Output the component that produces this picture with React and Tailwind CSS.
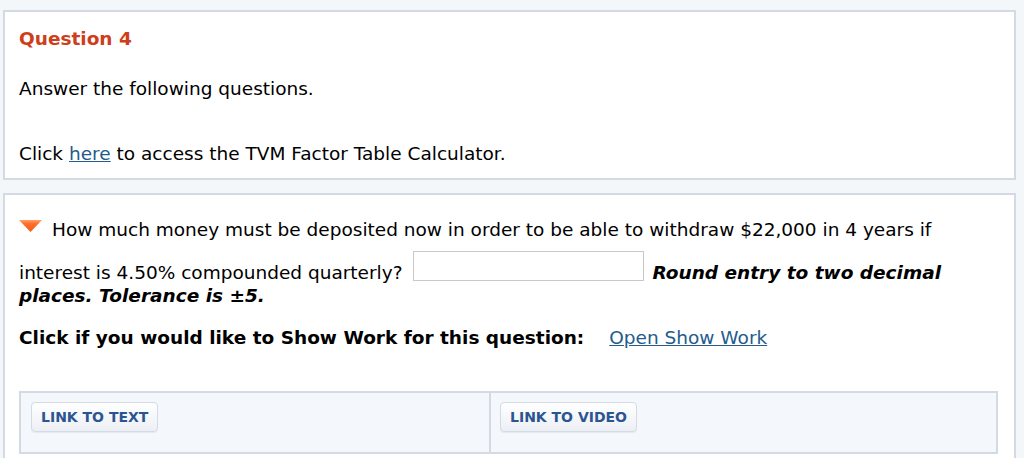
import React from 'react';

function Caret() {
  return (
    <svg width="23" height="12" viewBox="0 0 23 12" className="shrink-0 mt-[1px]">
      <defs>
        <linearGradient id="caret" x1="0" y1="0" x2="0" y2="1">
          <stop offset="0" stopColor="#ffa06a" />
          <stop offset="0.3" stopColor="#ff6f2c" />
          <stop offset="1" stopColor="#f25a17" />
        </linearGradient>
      </defs>
      <polygon points="0,0 23,0 11.5,12" fill="url(#caret)" />
    </svg>
  );
}

function LinkButton({ children }) {
  return (
    <button className="h-[30px] px-[9px] rounded-[4px] border border-[#d5dbe4] bg-gradient-to-b from-white to-[#eceff4] shadow-[0_1px_1px_rgba(0,0,0,0.06)] text-[14px] font-bold text-[#2b5591] leading-none">
      {children}
    </button>
  );
}

export default function App() {
  return (
    <div className="min-h-[458px] bg-[#f4f7fa] pt-[10px] pl-[3px] font-['DejaVu_Sans',Verdana,sans-serif] text-[18.5px] leading-[23px] text-black">
      <section className="w-[1013px] bg-white border-2 border-[#d3dae4] pt-[15px] pb-[13px] px-[14px]">
        <h2 className="font-bold text-[#cf3e1b]">Question 4</h2>
        <p className="mt-[27px]">Answer the following questions.</p>
        <p className="mt-[42px]">
          Click <a href="#" className="text-[#235b8e] underline">here</a> to access the TVM Factor Table Calculator.
        </p>
      </section>

      <section className="w-[1013px] mt-[13px] bg-white border-2 border-[#d3dae4] pt-[24px] pb-[20px] px-[14px]">
        <div className="flex items-start">
          <Caret />
          <span className="ml-[10px] -mt-[1px]">
            How much money must be deposited now in order to be able to withdraw $22,000 in 4 years if
          </span>
        </div>
        <div className="mt-[10px] flex items-end">
          <span className="mb-[-1px]">interest is 4.50% compounded quarterly?</span>
          <input type="text" className="ml-[10px] mb-[2px] w-[231px] h-[30px] border border-[#c9c9c9] bg-white outline-none" />
          <b className="ml-[9px] italic mb-[-1px]">Round entry to two decimal</b>
        </div>
        <b className="block italic mt-[1px]">places. Tolerance is ±5.</b>
        <div className="mt-[19px] flex">
          <b>Click if you would like to Show Work for this question:</b>
          <a href="#" className="ml-[25px] text-[#235b8e] underline">Open Show Work</a>
        </div>

        <div className="mt-[42px] mr-[2px] grid grid-cols-[470px_1fr] border-2 border-[#d3dae4] bg-[#f4f7fb]">
          <div className="pt-[9px] pb-[20px] pl-[10px] border-r-2 border-[#d3dae4]">
            <LinkButton>LINK TO TEXT</LinkButton>
          </div>
          <div className="pt-[9px] pb-[20px] pl-[9px]">
            <LinkButton>LINK TO VIDEO</LinkButton>
          </div>
        </div>
      </section>
    </div>
  );
}
